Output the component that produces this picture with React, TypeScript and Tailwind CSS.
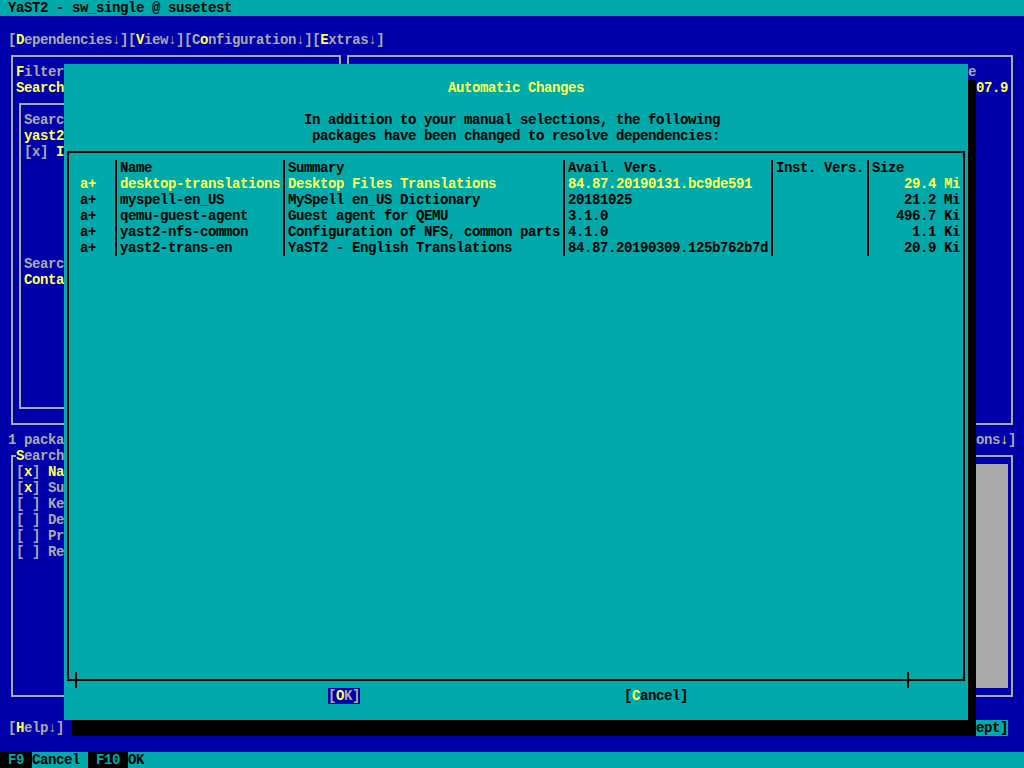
import React from "react";

type Seg = [string, string?];

const GRAY = "text-[#aaaaaa]";
const YEL = "text-[#ffff55]";

function Line({ segs, className = "" }: { segs: Seg[]; className?: string }) {
  return (
    <div className={`flex h-4 whitespace-pre ${className}`}>
      {segs.map(([t, c], i) => (
        <span key={i} className={c}>
          {t}
        </span>
      ))}
    </div>
  );
}

function Frame({
  box,
  line,
  label,
  extra,
  inner = "",
  children,
}: {
  box: string;
  line: string;
  label?: React.ReactNode;
  extra?: React.ReactNode;
  inner?: string;
  children?: React.ReactNode;
}) {
  return (
    <div className={`shrink-0 px-[3px] py-[7px] ${box}`}>
      <div className={`relative h-full border-2 px-[3px] py-[7px] ${line}`}>
        {label && (
          <span className="absolute -top-[9px] left-[3px] flex h-4 whitespace-pre bg-[#0000aa]">
            {label}
          </span>
        )}
        <div className={`h-full overflow-hidden ${inner}`}>{children}</div>
        {extra}
      </div>
    </div>
  );
}

const packages = [
  ["desktop-translations", "Desktop Files Translations", "84.87.20190131.bc9de591", "29.4 Mi", true],
  ["myspell-en_US", "MySpell en_US Dictionary", "20181025", "21.2 Mi", false],
  ["qemu-guest-agent", "Guest agent for QEMU", "3.1.0", "496.7 Ki", false],
  ["yast2-nfs-common", "Configuration of NFS, common parts", "4.1.0", "1.1 Ki", false],
  ["yast2-trans-en", "YaST2 - English Translations", "84.87.20190309.125b762b7d", "20.9 Ki", false],
] as const;

function Sep() {
  return (
    <span className="flex w-2 shrink-0 justify-center">
      <span className="w-[2px] bg-black" />
    </span>
  );
}

function TableRow({
  cells,
  className = "",
  sizeAlign = "text-right",
}: {
  cells: [string, string, string, string, string, string];
  className?: string;
  sizeAlign?: string;
}) {
  return (
    <div className={`flex h-4 whitespace-pre ${className}`}>
      <span className="w-[40px] shrink-0">{cells[0]}</span>
      <Sep />
      <span className="w-[160px] shrink-0 overflow-hidden">{cells[1]}</span>
      <Sep />
      <span className="w-[272px] shrink-0 overflow-hidden">{cells[2]}</span>
      <Sep />
      <span className="w-[200px] shrink-0 overflow-hidden">{cells[3]}</span>
      <Sep />
      <span className="w-[88px] shrink-0 overflow-hidden">{cells[4]}</span>
      <Sep />
      <span className={`w-[88px] shrink-0 overflow-hidden ${sizeAlign}`}>{cells[5]}</span>
    </div>
  );
}

function Dialog() {
  return (
    <>
      <div className="absolute left-[72px] top-20 h-[656px] w-[904px] bg-black" />
      <div className="absolute left-16 top-16 flex h-[656px] w-[904px] flex-col bg-[#00aaaa] text-black">
        <div className="h-4" />
        <Line className={`pl-[384px] ${YEL}`} segs={[["Automatic Changes"]]} />
        <div className="h-4" />
        <Line className="pl-[240px]" segs={[["In addition to your manual selections, the following"]]} />
        <Line className="pl-[248px]" segs={[["packages have been changed to resolve dependencies:"]]} />
        <Frame
          box="h-[544px] w-[904px]"
          line="border-black"
          extra={
            <>
              <span className="absolute -bottom-[9px] left-[6px] h-4 w-[2px] bg-black" />
              <span className="absolute -bottom-[9px] left-[838px] h-4 w-[2px] bg-black" />
            </>
          }
        >
          <TableRow
            sizeAlign="text-left"
            cells={["", "Name", "Summary", "Avail. Vers.", "Inst. Vers.", "Size"]}
          />
          {packages.map(([name, summary, avail, size, hl]) => (
            <TableRow
              key={name}
              className={hl ? YEL : ""}
              cells={[" a+", name, summary, avail, "", size]}
            />
          ))}
        </Frame>
        <div className="flex h-4 whitespace-pre">
          <span className={`ml-[264px] bg-[#0000aa] ${GRAY}`}>
            [<span className={YEL}>O</span>K]
          </span>
          <span className="ml-[264px]">
            [<span className={YEL}>C</span>ancel]
          </span>
        </div>
        <div className="h-4" />
      </div>
    </>
  );
}

export default function App() {
  return (
    <div className="relative h-[768px] w-[1024px] overflow-hidden bg-[#0000aa] font-['Liberation_Mono','DejaVu_Sans_Mono',monospace] text-[14px] font-bold leading-4 tracking-[-0.4px] text-[#aaaaaa]">
      {/* title bar */}
      <Line className="bg-[#00aaaa] text-black" segs={[[" YaST2 - sw_single @ susetest"]]} />
      <div className="h-4" />
      {/* menu bar */}
      <Line
        segs={[
          [" ["],
          ["D", YEL],
          ["ependencies↓]["],
          ["V", YEL],
          ["iew↓][C"],
          ["o", YEL],
          ["nfiguration↓]["],
          ["E", YEL],
          ["xtras↓]"],
        ]}
      />

      {/* upper panels */}
      <div className="flex h-[384px] pl-2">
        <Frame box="h-[384px] w-[336px]" line="border-[#aaaaaa]">
          <Line segs={[["F", YEL], ["ilter"]]} />
          <Line segs={[["Search", YEL]]} />
          <Frame box="h-[320px] w-[320px]" line="border-[#aaaaaa]">
            <Line segs={[["Search Phrase"]]} />
            <Line segs={[["yast2", YEL]]} />
            <Line segs={[["[x] "], ["I", YEL], ["gnore Case"]]} />
            <div className="h-24" />
            <Line segs={[["Search Mode"]]} />
            <Line segs={[["Contains", YEL]]} />
          </Frame>
        </Frame>
        <Frame box="h-[384px] w-[672px]" line="border-[#aaaaaa]">
          <Line className="pl-[592px]" segs={[["Size"]]} />
          <Line className={`pl-[616px] ${YEL}`} segs={[["107.9"]]} />
        </Frame>
      </div>

      {/* status line */}
      <div className="flex h-4 justify-between whitespace-pre px-2">
        <span>1 package found</span>
        <span>
          [Actions<span className={YEL}>↓</span>]
        </span>
      </div>

      {/* lower panels */}
      <div className="flex h-[256px] pl-2">
        <Frame
          box="h-[256px] w-[336px]"
          line="border-[#aaaaaa]"
          label={
            <>
              <span className={YEL}>S</span>earch
            </>
          }
        >
          <Line segs={[["["], ["x", YEL], ["] "], ["Name", YEL]]} />
          <Line segs={[["["], ["x", YEL], ["] Summary"]]} />
          <Line segs={[["[ ] Keywords"]]} />
          <Line segs={[["[ ] Description"]]} />
          <Line segs={[["[ ] Provides"]]} />
          <Line segs={[["[ ] Required"]]} />
        </Frame>
        <Frame box="h-[256px] w-[672px]" line="border-[#aaaaaa]" inner="bg-[#aaaaaa]" />
      </div>

      <div className="h-4" />
      {/* bottom buttons */}
      <div className="flex h-4 justify-between whitespace-pre pl-2 pr-4">
        <span>
          [<span className={YEL}>H</span>elp↓]
        </span>
        <span className="bg-[#00aaaa] text-black">[Accept]</span>
      </div>
      <div className="h-4" />
      {/* function keys */}
      <div className="flex h-4 whitespace-pre bg-[#00aaaa] text-black">
        <span className="bg-black text-[#00aaaa]"> F9 </span>
        <span>Cancel </span>
        <span className="bg-black text-[#00aaaa]"> F10 </span>
        <span>OK</span>
      </div>

      <Dialog />
    </div>
  );
}
